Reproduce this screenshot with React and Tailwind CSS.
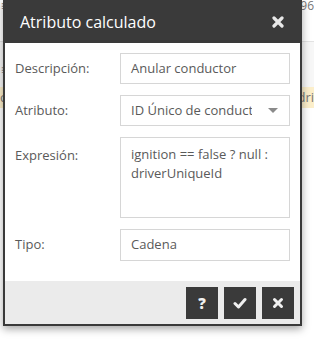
import React from 'react';

const Label = ({ children, top = false }) => (
  <div className={`w-[105px] shrink-0 text-[13px] text-[#5a5a5a] ${top ? 'pt-[9px]' : 'self-center'}`}>{children}</div>
);

export default function App() {
  return (
    <div className="relative w-[314px] h-[339px] overflow-hidden bg-white" style={{ fontFamily: '"Open Sans", sans-serif' }}>
      {/* page behind the dialog */}
      <div className="flex flex-col">
        <div className="h-[42px] border-b border-[#e3e3e3] flex justify-between pl-[1px] text-[12px] leading-[12px] text-[#777]">
          <span>≡</span>
          <span>96</span>
        </div>
        <div className="h-[45px] bg-[#f7f7f7] flex items-end px-[1px] pb-[8px] text-[12px] text-[#888]">≡</div>
        <div className="h-[21px] bg-[#fcefcb] flex items-center justify-between text-[13px] text-[#777]">
          <span>c</span>
          <span>dri</span>
        </div>
      </div>

      {/* dialog */}
      <div className="absolute left-[3px] top-0 w-[299px] flex flex-col border-2 border-t-0 border-[#3a3a3a] bg-white shadow-[0_3px_8px_rgba(0,0,0,0.35)]">
        <div className="h-[43px] -mx-[2px] bg-[#3a3a3a] flex items-center justify-between pl-[17px] pr-[17px]">
          <span className="text-white text-[16px] pt-[1px]">Atributo calculado</span>
          <svg width="12" height="12" viewBox="0 0 12 12" className="mr-[1px]">
            <path d="M2 2 L10 10 M10 2 L2 10" stroke="#e8e8e8" strokeWidth="3.2" strokeLinecap="round" />
          </svg>
        </div>

        <div className="flex flex-col gap-[11px] px-[10px] pt-[10px] pb-[20px]">
          <div className="flex">
            <Label>Descripción:</Label>
            <div className="w-[170px] h-[31px] border border-[#d6d6d6] flex items-center px-[10px] text-[13px] text-[#5a5a5a]">Anular conductor</div>
          </div>
          <div className="flex">
            <Label>Atributo:</Label>
            <div className="w-[170px] h-[31px] border border-[#d6d6d6] flex items-center pl-[10px] pr-[11px] text-[13px] text-[#5a5a5a]">
              <span className="w-[121px] overflow-hidden whitespace-nowrap">ID Único de conductor</span>
              <span className="ml-auto w-0 h-0 border-l-[5px] border-r-[5px] border-t-[5px] border-l-transparent border-r-transparent border-t-[#8a8a8a]" />
            </div>
          </div>
          <div className="flex">
            <Label top>Expresión:</Label>
            <div className="w-[170px] h-[81px] border border-[#d6d6d6] px-[10px] pt-[7px] text-[13px] leading-[19px] text-[#5a5a5a]">
              ignition == false ? null : driverUniqueId
            </div>
          </div>
          <div className="flex">
            <Label>Tipo:</Label>
            <div className="w-[170px] h-[32px] border border-[#d6d6d6] flex items-center px-[10px] text-[13px] text-[#5a5a5a]">Cadena</div>
          </div>
        </div>

        <div className="h-[43px] bg-[#ebebeb] flex justify-end items-start gap-[6px] pt-[6px] pr-[6px]">
          <button className="w-[32px] h-[32px] bg-[#3a3a3a] flex items-center justify-center text-[#f0f0f0] text-[15px] font-extrabold">?</button>
          <button className="w-[32px] h-[32px] bg-[#3a3a3a] flex items-center justify-center">
            <svg width="14" height="12" viewBox="0 0 14 12">
              <path d="M2 6.5 L5.5 10 L12 2.5" fill="none" stroke="#f0f0f0" strokeWidth="3" strokeLinecap="round" strokeLinejoin="round" />
            </svg>
          </button>
          <button className="w-[32px] h-[32px] bg-[#3a3a3a] flex items-center justify-center">
            <svg width="12" height="12" viewBox="0 0 12 12">
              <path d="M2.5 2.5 L9.5 9.5 M9.5 2.5 L2.5 9.5" stroke="#f0f0f0" strokeWidth="3" strokeLinecap="round" />
            </svg>
          </button>
        </div>
      </div>
    </div>
  );
}
